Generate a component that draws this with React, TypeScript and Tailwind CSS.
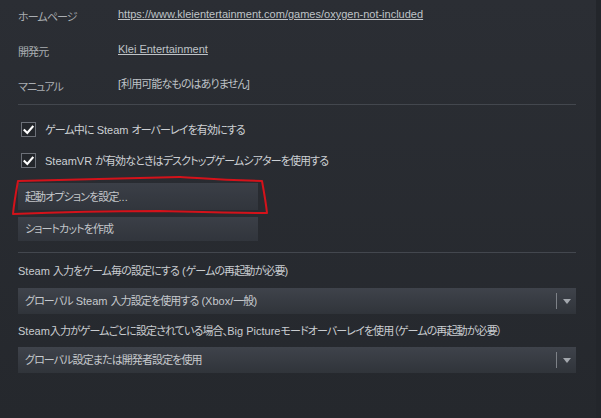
import React from 'react';

const font = "font-['Liberation_Sans','Noto_Sans_CJK_JP',sans-serif] [font-feature-settings:'palt']";

// Japanese runs render narrower in the original (Meiryo UI), so tighten them
function T({ children }: { children: string }) {
  const parts = children.split(/([\u3000-\u30ff\u4e00-\u9fff\uff00-\uffef]+)/);
  return (
    <>
      {parts.map((p, i) =>
        i % 2 === 1 ? (
          <span key={i} className="tracking-[-0.9px]">{p}</span>
        ) : (
          <span key={i}>{p}</span>
        )
      )}
    </>
  );
}

function InfoRow({ label, children }: { label: string; children: React.ReactNode }) {
  return (
    <div className="flex h-[35px] items-start">
      <div className="w-[100px] pt-[3px] text-[#a9adb2]"><T>{label}</T></div>
      <div className="text-[#bfc3c7]">{children}</div>
    </div>
  );
}

function Check({ label }: { label: string }) {
  return (
    <div className="flex h-[31px] items-center gap-[9px] pl-[3px]">
      <div className="flex h-[15px] w-[15px] items-center justify-center border border-[#6c7078] bg-[#23262b]">
        <svg width="11" height="10" viewBox="0 0 11 10">
          <path d="M1.5 5.2 L4.3 8 L9.6 1.8" fill="none" stroke="#ffffff" strokeWidth="2.2" strokeLinecap="square" />
        </svg>
      </div>
      <span className="text-[#cdd0d4]"><T>{label}</T></span>
    </div>
  );
}

function Button({ label, h }: { label: string; h: string }) {
  return (
    <div className={`flex w-[240px] items-center bg-gradient-to-b from-[#3b3f47] to-[#31353c] pl-[7px] text-[#c3c6ca] ${h}`}>
      <T>{label}</T>
    </div>
  );
}

function Dropdown({ label }: { label: string }) {
  return (
    <div className="flex h-[26px] w-[558px] items-center bg-gradient-to-b from-[#3f434b] to-[#30343a] pl-[7px] text-[#c6c9cd]">
      <span className="flex-1"><T>{label}</T></span>
      <div className="h-[16px] w-px bg-[#7d8187]" />
      <div className="flex w-[19px] justify-center">
        <svg width="8" height="5" viewBox="0 0 8 5">
          <path d="M0 0 H8 L4 5 Z" fill="#a3a7ad" />
        </svg>
      </div>
    </div>
  );
}

export default function App() {
  return (
    <div className={`relative flex h-[418px] w-[601px] overflow-hidden bg-gradient-to-b from-[#2b2e34] to-[#25282d] text-[11px] leading-[14px] ${font}`}>
      <div className="flex-1 pl-[18px] pr-[20px] pt-[7px]">
        <InfoRow label="ホームページ">
          <span className="underline">https://www.kleientertainment.com/games/oxygen-not-included</span>
        </InfoRow>
        <InfoRow label="開発元">
          <span className="underline">Klei Entertainment</span>
        </InfoRow>
        <InfoRow label="マニュアル"><T>[利用可能なものはありません]</T></InfoRow>

        <div className="mt-[-8px] h-px bg-[#43474e]" />

        <div className="pt-[9px]">
          <Check label="ゲーム中に Steam オーバーレイを有効にする" />
          <Check label="SteamVR が有効なときはデスクトップゲームシアターを使用する" />
        </div>

        <div className="mt-[7px] flex flex-col gap-[7px]">
          <Button label="起動オプションを設定..." h="h-[27px]" />
          <Button label="ショートカットを作成" h="h-[24px]" />
        </div>

        <div className="mt-[11px] h-px bg-[#43474e]" />

        <div className="flex h-[35px] items-center text-[#c9ccd0]">
          <span><T>Steam 入力をゲーム毎の設定にする (ゲームの再起動が必要)</T></span>
        </div>
        <Dropdown label="グローバル Steam 入力設定を使用する (Xbox/一般)" />
        <div className="flex h-[33px] items-center text-[#c9ccd0]">
          <span><T>Steam入力がゲームごとに設定されている場合、Big Pictureモードオーバーレイを使用（ゲームの再起動が必要）</T></span>
        </div>
        <Dropdown label="グローバル設定または開発者設定を使用" />
      </div>
      <div className="w-[5px] bg-[#23262b]" />

      <svg className="pointer-events-none absolute left-0 top-0" width="601" height="418">
        <path
          d="M18 181 C60 180 120 178 180 177 C200 178 215 180 262 181 C264 192 266 203 267 213 C230 213 200 212 160 211 C110 211 60 212 13 214 C14 203 16 192 18 181 Z"
          fill="none"
          stroke="#d4121a"
          strokeWidth="2"
          strokeLinejoin="round"
        />
      </svg>
    </div>
  );
}
